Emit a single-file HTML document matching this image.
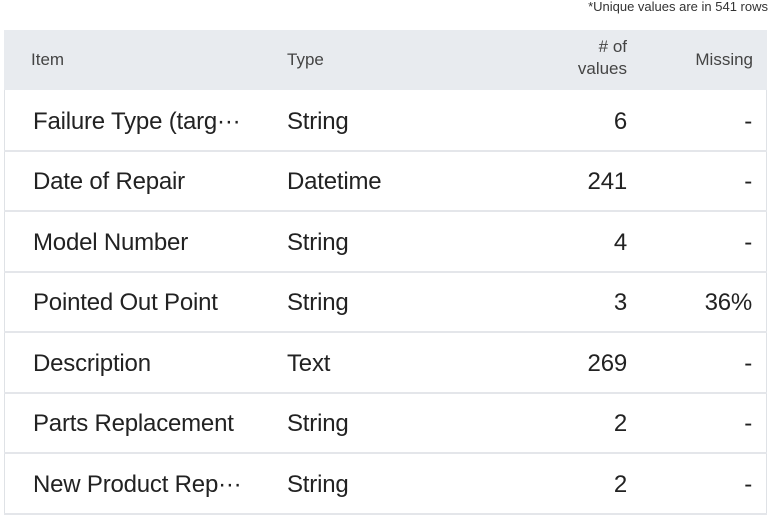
<!DOCTYPE html>
<html><head><style>
body{margin:0;width:771px;height:518px;background:#fff;font-family:"Liberation Sans",sans-serif;color:#222;position:relative;overflow:hidden}
.note{position:absolute;right:3px;top:-1px;font-size:13px;color:#333}
.tbl{position:absolute;left:4px;top:30px;width:763px;height:485px;border:1px solid #dfe2e6;border-top:none;box-sizing:border-box}
.hd{position:absolute;left:4px;top:30px;width:763px;height:60px;background:#e8ebef}
.hd div{position:absolute;font-size:17px;color:#444}
.row{position:absolute;left:4px;width:763px;height:61px;border-bottom:2px solid #e4e6ea;box-sizing:border-box}
.row div{position:absolute;top:17px;font-size:24px;color:#222;letter-spacing:-0.2px}
.c1{left:29px}.c2{left:283px}.c3{right:140px;text-align:right}.c4{right:15px;text-align:right}
</style></head><body>
<div class="note">*Unique values are in 541 rows</div>
<div class="tbl"></div>
<div class="hd">
<div style="left:27px;top:20px">Item</div>
<div style="left:283px;top:20px">Type</div>
<div style="right:140px;top:6px;text-align:right;line-height:22px"># of<br>values</div>
<div style="right:14px;top:20px">Missing</div>
</div>
<div class="row" style="top:91px"><div class="c1">Failure Type (targ···</div><div class="c2">String</div><div class="c3">6</div><div class="c4">-</div></div>
<div class="row" style="top:151px"><div class="c1">Date of Repair</div><div class="c2">Datetime</div><div class="c3">241</div><div class="c4">-</div></div>
<div class="row" style="top:212px"><div class="c1">Model Number</div><div class="c2">String</div><div class="c3">4</div><div class="c4">-</div></div>
<div class="row" style="top:272px"><div class="c1">Pointed Out Point</div><div class="c2">String</div><div class="c3">3</div><div class="c4">36%</div></div>
<div class="row" style="top:333px"><div class="c1">Description</div><div class="c2">Text</div><div class="c3">269</div><div class="c4">-</div></div>
<div class="row" style="top:393px"><div class="c1">Parts Replacement</div><div class="c2">String</div><div class="c3">2</div><div class="c4">-</div></div>
<div class="row" style="top:454px"><div class="c1">New Product Rep···</div><div class="c2">String</div><div class="c3">2</div><div class="c4">-</div></div>
</body></html>
